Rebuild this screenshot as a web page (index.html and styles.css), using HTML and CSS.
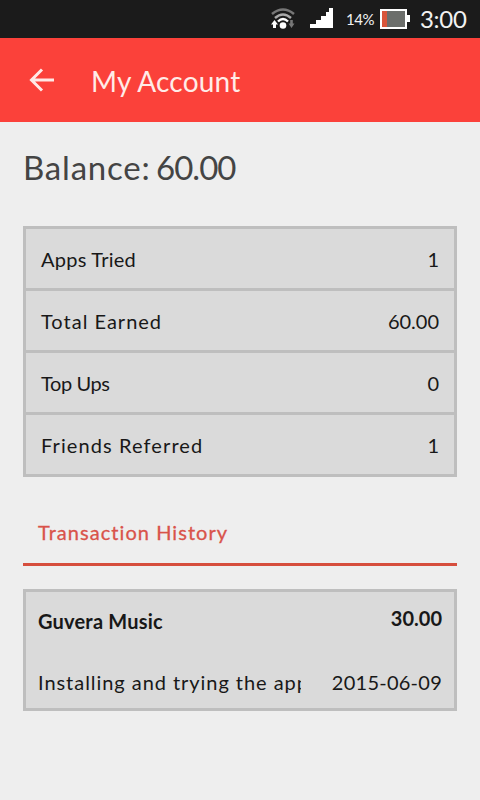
FILE: index.html
```html
<!DOCTYPE html>
<html lang="en">
<head>
<meta charset="utf-8">
<title>My Account</title>
<link rel="stylesheet" href="styles.css">
</head>
<body>
<div class="status">
  <svg class="wifi" width="24" height="22" viewBox="0 0 24 22" fill="none">
    <path d="M1 6Q12-3 23 6" stroke="#777" stroke-width="2.6"/>
    <path d="M4 10Q12 3 20 10" stroke="#aaa" stroke-width="2.4"/>
    <path d="M7 13.500Q12 8.500 17 13.500" stroke="#fff" stroke-width="2.4"/>
    <circle cx="12" cy="17.500" r="3.300" fill="#fff"/>
    <path d="M3.500 12l3.500 4.500H5V20H2v-3.500H0z" fill="#fff"/>
    <path d="M20.500 20l3-4.500h-1.700V12h-2.600v3.500h-1.700z" fill="#777"/>
  </svg>
  <svg class="signal" width="23" height="20" viewBox="0 0 23 20">
    <path d="M0 20v-4h6v-4h5V8h5V4h3V0h4v20z" fill="#fff"/>
  </svg>
  <span class="percent">14%</span>
  <svg class="battery" width="30" height="20" viewBox="0 0 30 20">
    <path d="M0 0h27v6h3v7h-3v7H0z" fill="#fff"/>
    <path d="M2 2h23v16H2z" fill="#6c6e6b"/>
    <path d="M2 2h5v16H2z" fill="#d9553a"/>
  </svg>
  <span class="clock">3:00</span>
</div>
<header class="bar">
  <svg class="back" width="26" height="24" viewBox="0 0 26 24" fill="none" stroke="#ffe9e6" stroke-width="3">
    <path d="M13 1.500L2.500 12 13 22.500M2.500 12H25"/>
  </svg>
  <h1 class="title">My Account</h1>
</header>
<main class="content">
  <h2 class="balance"><span class="label">Balance:</span> <span class="total">60.00</span></h2>
  <div class="stats">
    <div class="row"><span class="apps">Apps Tried</span><span>1</span></div>
    <div class="row"><span class="earned">Total Earned</span><span>60.00</span></div>
    <div class="row"><span class="top-ups">Top Ups</span><span>0</span></div>
    <div class="row"><span class="friends">Friends Referred</span><span>1</span></div>
  </div>
  <h3 class="section">Transaction History</h3>
  <div class="card">
    <div class="line strong"><span class="name">Guvera Music</span><span class="amount">30.00</span></div>
    <div class="line detail"><span class="desc">Installing and trying the app</span><span class="date">2015-06-09</span></div>
  </div>
</main>
</body>
</html>
```
FILE: styles.css
```css
* { box-sizing: border-box; }
body {
  margin: 0;
  height: 800px;
  overflow: hidden;
  background: #eee;
  color: #181818;
  font-family: Lato, "Open Sans", sans-serif;
  font-size: 20px;
  font-variant-ligatures: none;
  line-height: 24px;
  white-space: nowrap;
}
h1, h2, h3 { margin: 0; font-weight: 400; }
.status {
  height: 38px;
  padding-right: 14px;
  display: flex;
  align-items: center;
  justify-content: flex-end;
  background: #1b1b1b;
  color: #f2f2f2;
}
.wifi { margin-right: 15px; }
.signal { margin: 0 13px 2px 0; }
.percent { width: 27px; margin-right: 7px; font-size: 15px; letter-spacing: -0.5px; }
.battery { margin-right: 10px; }
.clock { width: 46px; font-size: 24px; letter-spacing: -0.3px; }
.bar {
  height: 84px;
  padding-left: 29px;
  display: flex;
  align-items: center;
  background: #fb413a;
  color: #ffece8;
}
.back { margin-right: 36px; }
.title { padding-top: 2px; font-size: 28px; line-height: 34px; letter-spacing: 0.2px; }
.content { padding: 26px 23px 0; }
.balance { height: 78px; font-size: 33px; line-height: 38px; color: #444; }
.label { letter-spacing: 0.8px; }
.total { margin-left: -3px; letter-spacing: -1px; }
.stats {
  border: 3px solid #bebebe;
  background: #dadada;
}
.row {
  height: 62px;
  padding: 0 15px;
  display: flex;
  align-items: center;
  justify-content: space-between;
  border-bottom: 3px solid #bebebe;
}
.row:last-child { height: 59px; border-bottom: 0; }
.apps { letter-spacing: 0.25px; }
.earned { letter-spacing: 1px; }
.top-ups { letter-spacing: -0.4px; }
.friends { letter-spacing: 1.1px; }
.section {
  height: 89px;
  padding: 43px 15px 0;
  border-bottom: 3px solid #d64e3d;
  font-size: 20px;
  line-height: 24px;
  letter-spacing: 1.05px;
  color: #d9534a;
  -webkit-text-stroke: 0.3px #d9534a;
}
.card {
  height: 122px;
  margin-top: 23px;
  padding: 17px 12px 0;
  border: 3px solid #bebebe;
  background: #dadada;
}
.line { display: flex; justify-content: space-between; }
.strong { font-weight: 700; }
.name { letter-spacing: 0.2px; }
.amount { margin-top: -3px; margin-bottom: 3px; }
.detail { margin-top: 37px; }
.desc { width: 263px; overflow: hidden; letter-spacing: 0.95px; }
.date { letter-spacing: 0.25px; }
```
